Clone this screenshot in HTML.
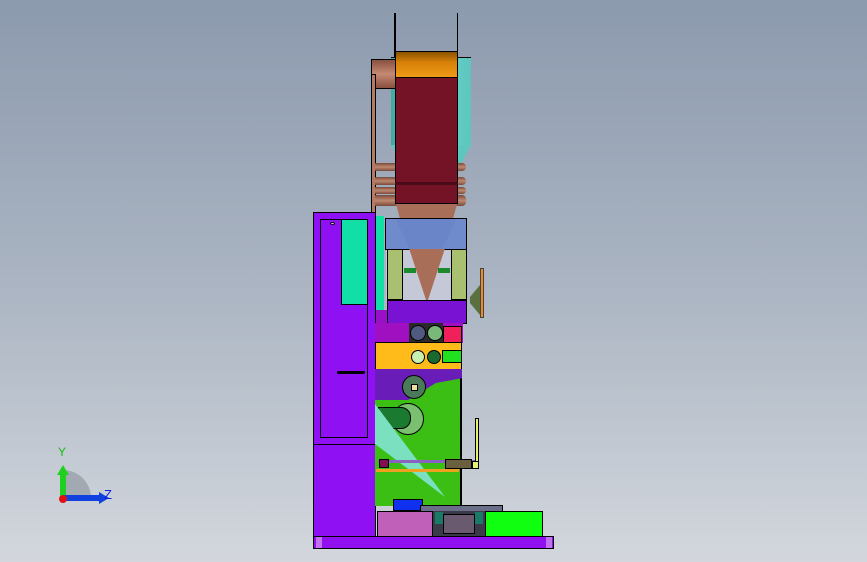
<!DOCTYPE html>
<html><head><meta charset="utf-8"><style>
html,body{margin:0;padding:0}
body{width:867px;height:562px;position:relative;overflow:hidden;background:linear-gradient(#8c9aae 0%,#aab4c2 50%,#d3d7dd 100%);font-family:"Liberation Sans",sans-serif}
.a{position:absolute;box-sizing:border-box}
.b{border:1px solid #000}
</style></head><body>
<!-- top lines -->
<div class="a" style="left:394px;top:13px;width:2px;height:122px;background:#000"></div>
<div class="a" style="left:457px;top:13px;width:1px;height:40px;background:#000"></div>
<!-- teal back -->
<div class="a" style="left:391px;top:57px;width:80px;height:89px;background:linear-gradient(90deg,#3fa9a2,#6fd3cc,#5cc6bf);border-top:1px solid #000"></div>
<div class="a" style="left:391px;top:145px;width:80px;height:30px;background:#5cc6bf;clip-path:polygon(0 0,100% 0,80% 100%,20% 100%)"></div>
<!-- copper pipe -->
<div class="a b" style="left:371px;top:59px;width:25px;height:30px;background:linear-gradient(#8a5040,#c48a72,#8a5040)"></div>
<div class="a b" style="left:371px;top:74px;width:5px;height:140px;background:#b57a64"></div>
<div class="a" style="left:375px;top:163px;width:91px;height:8px;background:linear-gradient(#7a4a3a,#c08870,#7a4a3a);border-radius:0 4px 4px 0"></div>
<div class="a" style="left:375px;top:177px;width:91px;height:8px;background:linear-gradient(#7a4a3a,#c08870,#7a4a3a);border-radius:0 4px 4px 0"></div>
<div class="a" style="left:375px;top:187px;width:91px;height:7px;background:linear-gradient(#7a4a3a,#c08870,#7a4a3a);border-radius:0 4px 4px 0"></div>
<div class="a" style="left:375px;top:195px;width:91px;height:11px;background:linear-gradient(#7a4a3a,#c08870,#7a4a3a);border-radius:0 4px 4px 0"></div>
<!-- orange / maroon -->
<div class="a b" style="left:395px;top:51px;width:63px;height:27px;background:linear-gradient(#8a5200,#d68008 40%,#f09a18)"></div>
<div class="a b" style="left:395px;top:77px;width:63px;height:127px;background:#741226"></div>
<div class="a" style="left:395px;top:182px;width:63px;height:3px;background:#4a0a18"></div>
<!-- cone -->
<div class="a" style="left:396px;top:204px;width:61px;height:106px;background:#a86e58;clip-path:polygon(0 0,100% 0,53% 100%,47% 100%)"></div>
<!-- left cabinet -->
<div class="a b" style="left:313px;top:212px;width:63px;height:334px;background:#8f10f2"></div>
<div class="a b" style="left:320px;top:219px;width:48px;height:219px;background:#8f10f2"></div>
<div class="a b" style="left:341px;top:219px;width:27px;height:86px;background:#12dfa5"></div>
<div class="a" style="left:313px;top:444px;width:63px;height:1px;background:#000"></div>
<div class="a" style="left:337px;top:371px;width:28px;height:3px;background:#000;border-radius:2px"></div>
<div class="a b" style="left:330px;top:222px;width:5px;height:3px;border-radius:50%;background:#fcc"></div>
<div class="a" style="left:376px;top:216px;width:8px;height:100px;background:#12dfa5"></div>
<!-- blue box -->
<div class="a b" style="left:385px;top:218px;width:82px;height:32px;background:#6f8bcc"></div>
<div class="a" style="left:386px;top:219px;width:80px;height:30px;background:#6a86c8;clip-path:polygon(12% 0,88% 0,70% 100%,30% 100%)"></div>
<div class="a" style="left:386px;top:250px;width:80px;height:50px;background:#c5c8d6"></div>
<div class="a b" style="left:387px;top:249px;width:16px;height:51px;background:#a8c070"></div>
<div class="a b" style="left:451px;top:249px;width:16px;height:51px;background:#a8c070"></div>
<div class="a" style="left:403px;top:249px;width:48px;height:51px;background:#a86e58;clip-path:polygon(13% 0,87% 0,52% 100%,48% 100%)"></div>
<div class="a" style="left:404px;top:268px;width:12px;height:5px;background:#1a8a2a"></div>
<div class="a" style="left:438px;top:268px;width:12px;height:5px;background:#1a8a2a"></div>
<!-- purple bar -->
<div class="a b" style="left:387px;top:300px;width:80px;height:24px;background:#7a12d4"></div>
<div class="a" style="left:376px;top:310px;width:11px;height:14px;background:#9a10c8"></div>
<!-- right small parts -->
<div class="a" style="left:480px;top:268px;width:4px;height:50px;background:#f08a20;border:1px solid #444"></div>
<div class="a" style="left:470px;top:285px;width:10px;height:30px;background:#5a7040;clip-path:polygon(100% 0,100% 100%,0 60%,0 40%)"></div>
<!-- row gears -->
<div class="a" style="left:375px;top:323px;width:88px;height:20px;background:#a010c0"></div>
<div class="a" style="left:409px;top:323px;width:34px;height:20px;background:#2a2a2a"></div>
<div class="a b" style="left:410px;top:325px;width:16px;height:16px;border-radius:50%;background:#505a80"></div>
<div class="a b" style="left:427px;top:325px;width:16px;height:16px;border-radius:50%;background:#7ab87a"></div>
<div class="a b" style="left:443px;top:326px;width:19px;height:17px;background:#f0205a"></div>
<!-- orange bar -->
<div class="a b" style="left:375px;top:342px;width:87px;height:28px;background:#ffbb1a"></div>
<div class="a b" style="left:442px;top:350px;width:20px;height:13px;background:#20e020"></div>
<div class="a b" style="left:411px;top:350px;width:14px;height:14px;border-radius:50%;background:#c8f0b0"></div>
<div class="a b" style="left:427px;top:350px;width:14px;height:14px;border-radius:50%;background:#1a6a30"></div>
<!-- green body -->
<div class="a" style="left:375px;top:370px;width:87px;height:136px;background:#3cbf14;border-right:2px solid #000"></div>
<div class="a" style="left:375px;top:369px;width:87px;height:31px;background:#6a1cb8;clip-path:polygon(0 0,100% 0,100% 30%,70% 45%,38% 100%,0 100%)"></div>
<div class="a b" style="left:402px;top:375px;width:24px;height:24px;border-radius:50%;background:#4a7a5a"></div>
<div class="a b" style="left:411px;top:384px;width:7px;height:7px;background:#f0e0a0"></div>
<div class="a b" style="left:392px;top:403px;width:32px;height:32px;border-radius:50%;background:#7ac070"></div>
<div class="a b" style="left:378px;top:407px;width:33px;height:22px;background:#1a7a30;border-radius:0 10px 10px 0"></div>
<div class="a" style="left:375px;top:404px;width:70px;height:93px;background:#7ae0c0;clip-path:polygon(0 0,100% 100%,0 43%)"></div>
<div class="a" style="left:378px;top:460px;width:100px;height:3px;background:#8a60c0"></div>
<div class="a b" style="left:379px;top:459px;width:10px;height:9px;background:#801050"></div>
<div class="a b" style="left:445px;top:459px;width:27px;height:10px;background:#6a6040"></div>
<div class="a" style="left:376px;top:469px;width:83px;height:3px;background:#f0a020"></div>
<div class="a b" style="left:475px;top:418px;width:4px;height:50px;background:#e8f070"></div>
<div class="a b" style="left:472px;top:461px;width:7px;height:8px;background:#e8f070"></div>
<!-- bottom -->
<div class="a b" style="left:393px;top:499px;width:30px;height:12px;background:#1030f0"></div>
<div class="a b" style="left:420px;top:505px;width:83px;height:7px;background:#6a6e88"></div>
<div class="a b" style="left:377px;top:511px;width:56px;height:26px;background:#c060b8"></div>
<div class="a" style="left:433px;top:511px;width:52px;height:26px;background:#3a3a4a"></div>
<div class="a b" style="left:443px;top:514px;width:32px;height:20px;background:#6a5a70"></div>
<div class="a" style="left:435px;top:512px;width:8px;height:12px;background:#1a7a6a"></div>
<div class="a" style="left:475px;top:512px;width:8px;height:12px;background:#1a7a6a"></div>
<div class="a b" style="left:485px;top:511px;width:58px;height:26px;background:#10ff10"></div>
<div class="a b" style="left:313px;top:536px;width:241px;height:13px;background:#9010f0"></div>
<div class="a" style="left:316px;top:537px;width:6px;height:11px;background:#c070f0"></div>
<div class="a" style="left:546px;top:537px;width:6px;height:11px;background:#c070f0"></div>
<!-- axis triad -->
<svg class="a" style="left:45px;top:440px" width="70" height="70" viewBox="0 0 70 70">
<path d="M18 58 L18 30 A28 28 0 0 1 46 58 Z" fill="#9aa0aa" opacity="0.8"/>
<rect x="15" y="33" width="6" height="25" fill="#20d020"/>
<polygon points="12,35 18,25 24,35" fill="#20d020"/>
<rect x="18" y="55" width="38" height="6" fill="#1040e0"/>
<polygon points="54,52 64,58 54,64" fill="#1040e0"/>
<circle cx="18" cy="59" r="4" fill="#e01010"/>
<text x="13" y="16" font-size="12" fill="#10c010" font-family="Liberation Sans">Y</text>
<text x="59" y="59" font-size="13" fill="#1020e0" font-family="Liberation Sans">Z</text>
</svg>
</body></html>
